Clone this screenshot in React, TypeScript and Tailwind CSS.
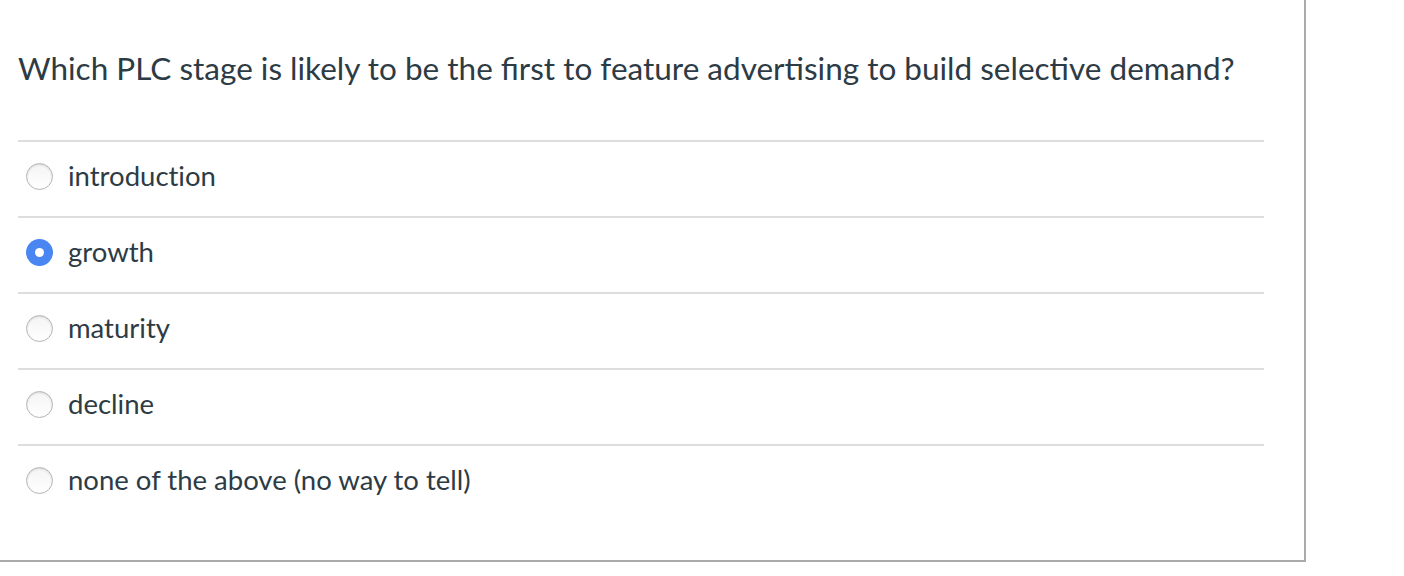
const options = [
  { label: "introduction", checked: false },
  { label: "growth", checked: true },
  { label: "maturity", checked: false },
  { label: "decline", checked: false },
  { label: "none of the above (no way to tell)", checked: false },
];

function Radio({ checked }: { checked: boolean }) {
  if (checked) {
    return (
      <span className="flex h-[27px] w-[27px] shrink-0 items-center justify-center rounded-full bg-[#4a86f2]">
        <span className="h-[9px] w-[9px] rounded-full bg-white" />
      </span>
    );
  }
  return (
    <span className="h-[27px] w-[27px] shrink-0 rounded-full border border-[#b5b5b5] bg-gradient-to-b from-[#f4f4f4] to-white shadow-[inset_0_1px_2px_rgba(0,0,0,0.12)]" />
  );
}

export default function App() {
  return (
    <div className="h-[576px] w-[1404px] bg-white font-['Lato','Noto_Sans',sans-serif] text-[#2d3b45]">
      <div className="h-[562px] w-[1306px] border-b-2 border-r-2 border-[#aaaaaa] pl-[18px] pr-[40px]">
        <div className="flex h-[140px] items-start pt-[48px]">
          <h1 className="text-[31.5px] leading-[40px]">
            Which PLC stage is likely to be the first to feature adverti&zwnj;sing to build selective demand?
          </h1>
        </div>
        <div className="flex flex-col">
          {options.map((o) => (
            <label
              key={o.label}
              className="flex h-[76px] items-center gap-[15px] border-t-2 border-[#dddddd] pl-[8px] pb-[6px]"
            >
              <Radio checked={o.checked} />
              <span className="text-[27.5px] leading-[32px] [font-feature-settings:'liga'_0,'calt'_0,'dlig'_0]">
                {o.label}
              </span>
            </label>
          ))}
        </div>
      </div>
    </div>
  );
}
